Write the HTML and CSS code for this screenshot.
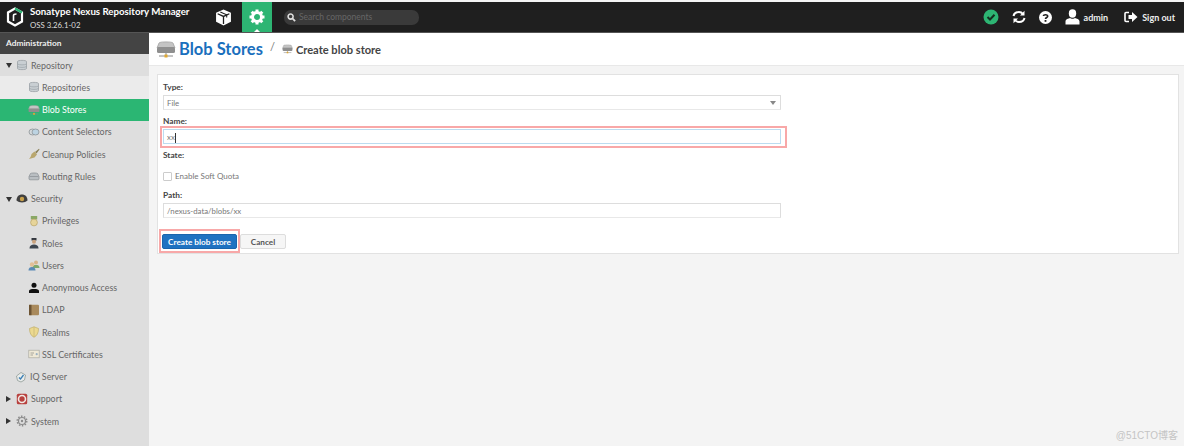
FILE: index.html
```html
<!DOCTYPE html>
<html lang="en">
<head>
  <meta charset="UTF-8">
  <title>Create blob store</title>
  <link rel="stylesheet" href="styles.css">
</head>
<body>
  <svg class="defs" width="0" height="0">
    <symbol id="i-db" viewBox="0 0 12 12">
      <path d="M1.5 2.5C1.5 1 10.500 1 10.500 2.500V9.500C10.500 11 1.500 11 1.500 9.500Z" fill="#c9cfd3" stroke="#9aa1a6" stroke-width=".8"/>
      <path d="M1.500 5C3 6.200 9 6.200 10.500 5M1.500 7.500C3 8.700 9 8.700 10.500 7.500" fill="none" stroke="#9aa1a6" stroke-width=".7"/>
    </symbol>
    <symbol id="i-blob" viewBox="0 0 20 17">
      <path d="M1 7L3 2C3.500 .5 16.500 .5 17 2L19 7Z" fill="#c4c4c4" stroke="#9a9a9a" stroke-width=".7"/>
      <rect x="1" y="6" width="18" height="6" rx="1.500" fill="#8f8f8f"/>
      <path d="M10 12V15M3 15H17" stroke="#8a8a8a" stroke-width="1"/>
      <rect x="8.500" y="13.500" width="3" height="3" fill="#e0a832"/>
    </symbol>
  </svg>

  <header class="topbar">
    <div class="brand">
      <svg class="logo" width="18" height="20" viewBox="0 0 18 20">
        <path d="M9 1.500L16 5.500V14.500L9 18.500L2 14.500V5.500Z" fill="none" stroke="#fff" stroke-width="2.200"/>
        <path d="M9 1.500L16 5.500" fill="none" stroke="#2db573" stroke-width="2.200"/>
        <path d="M7.500 14V8.500C7.500 7.500 8.500 7 10.500 7" fill="none" stroke="#fff" stroke-width="1.600"/>
      </svg>
      <div class="brand-text">
        <div class="brand-name">Sonatype Nexus Repository Manager</div>
        <div class="brand-version">OSS 3.26.1-02</div>
      </div>
    </div>
    <div class="nav-cube">
      <svg width="17" height="17" viewBox="0 0 16 16">
        <path d="M8 .5L15 3.500V12L8 15.500L1 12V3.500Z" fill="#fff"/>
        <path d="M2.500 4.500L8 7L13.500 4.500M8 7V14" fill="none" stroke="#1f1f1f" stroke-width="1.200"/>
        <path d="M5 2.800L11 5.500V8" fill="none" stroke="#1f1f1f" stroke-width="1"/>
      </svg>
    </div>
    <div class="nav-gear">
      <svg width="16" height="16" viewBox="0 0 16 16">
        <circle cx="8" cy="8" r="4.500" fill="none" stroke="#fff" stroke-width="3"/>
        <path d="M8 .5V3M8 13V15.500M.5 8H3M13 8H15.500M2.700 2.700L4.500 4.500M11.500 11.500L13.300 13.300M13.300 2.700L11.500 4.500M4.500 11.500L2.700 13.300" stroke="#fff" stroke-width="3"/>
      </svg>
    </div>
    <div class="search">
      <svg width="9" height="9" viewBox="0 0 10 10">
        <circle cx="4" cy="4" r="2.800" fill="none" stroke="#ddd" stroke-width="1.700"/>
        <path d="M6 6L9 9" stroke="#ddd" stroke-width="2"/>
      </svg>
      <span>Search components</span>
    </div>
    <div class="top-right">
      <svg class="status" width="16" height="16" viewBox="0 0 16 16">
        <circle cx="8" cy="8" r="7.500" fill="#2db573"/>
        <path d="M4.500 8L7 10.500L11.500 5.800" fill="none" stroke="#14301f" stroke-width="2"/>
      </svg>
      <svg class="refresh" width="14" height="14" viewBox="0 0 14 14">
        <path d="M1.500 6C2 3.500 4.200 2 7 2C8.800 2 10.200 3 11 4" fill="none" stroke="#fff" stroke-width="2"/>
        <path d="M12.500 .8V5.500H8Z" fill="#fff"/>
        <path d="M12.500 8C12 10.500 9.800 12 7 12C5.200 12 3.800 11 3 10" fill="none" stroke="#fff" stroke-width="2"/>
        <path d="M1.500 13.200V8.500H6Z" fill="#fff"/>
      </svg>
      <svg class="help" width="13" height="13" viewBox="0 0 13 13">
        <circle cx="6.500" cy="6.500" r="6.500" fill="#fff"/>
        <path d="M4.300 5C4.500 3.500 8.700 3.200 8.700 5.200C8.700 6.500 6.500 6.500 6.500 8" fill="none" stroke="#1f1f1f" stroke-width="1.600"/>
        <rect x="5.600" y="9" width="1.800" height="1.800" fill="#1f1f1f"/>
      </svg>
      <svg class="user" width="15" height="16" viewBox="0 0 15 16">
        <ellipse cx="7.500" cy="4.500" rx="3.700" ry="4.200" fill="#fff"/>
        <path d="M.5 15.500V12.500C.5 10 3.500 9.500 5 9C6 10 9 10 10 9C11.500 9.500 14.500 10 14.500 12.500V15.500Z" fill="#fff"/>
      </svg>
      <span class="top-label admin">admin</span>
      <svg class="signout" width="14" height="12" viewBox="0 0 14 12">
        <path d="M5 1.500H2C1.300 1.500 1 2 1 2.500V9.500C1 10 1.300 10.500 2 10.500H5" fill="none" stroke="#fff" stroke-width="1.600"/>
        <path d="M4.500 4H8V1L13.500 6L8 11V8H4.500Z" fill="#fff"/>
      </svg>
      <span class="top-label">Sign out</span>
    </div>
  </header>

  <div class="main">
    <nav class="sidebar">
      <div class="side-title">Administration</div>

      <div class="row"><i class="arrow-down"></i><svg class="ico" viewBox="0 0 12 12"><use href="#i-db"/></svg>Repository</div>
      <div class="row sub light"><svg class="ico" viewBox="0 0 12 12"><use href="#i-db"/></svg>Repositories</div>
      <div class="row sub active"><svg class="ico" viewBox="0 0 20 17"><use href="#i-blob"/></svg>Blob Stores</div>
      <div class="row sub">
        <svg class="ico" viewBox="0 0 12 12"><ellipse cx="4.500" cy="6" rx="3.500" ry="3" fill="#d5dadd" stroke="#8d9397" stroke-width=".8"/><ellipse cx="7.500" cy="6" rx="3.500" ry="3" fill="#bcd3e2" stroke="#8d9397" stroke-width=".8"/></svg>
        Content Selectors</div>
      <div class="row sub">
        <svg class="ico" viewBox="0 0 12 12"><path d="M7 4L11 .8L11.500 1.500L8.500 5.500Z" fill="#8b8158"/><path d="M6.500 3.500L9 6.500L6.500 9.500L1 11C2.500 9.500 3 8 3.500 6Z" fill="#b9a76e"/></svg>
        Cleanup Policies</div>
      <div class="row sub">
        <svg class="ico" viewBox="0 0 12 12"><path d="M1 6.500L2.500 3.500C3 2.800 9 2.800 9.500 3.500L11 6.500V9C11 9.500 10.500 9.800 10 9.800H2C1.500 9.800 1 9.500 1 9Z" fill="#b9bec2" stroke="#888e92" stroke-width=".7"/><path d="M1.500 6.500H10.500" stroke="#888e92" stroke-width=".7"/></svg>
        Routing Rules</div>

      <div class="row"><i class="arrow-down"></i>
        <svg class="ico" viewBox="0 0 12 12"><path d="M.5 7.500C.5 3.500 3 1.500 6 1.500C9 1.500 11.500 3.500 11.500 7.500C9 10 3 10 .5 7.500Z" fill="#3f3f3f"/><circle cx="6" cy="6" r="2.200" fill="#c8a04a"/></svg>
        Security</div>
      <div class="row sub">
        <svg class="ico" viewBox="0 0 12 12"><rect x="2.800" y="1" width="6.400" height="3.500" fill="#8aa866"/><circle cx="6" cy="7.500" r="3.400" fill="#e6d49a" stroke="#b8a468" stroke-width=".7"/></svg>
        Privileges</div>
      <div class="row sub">
        <svg class="ico" viewBox="0 0 12 12"><rect x="3.500" y="1" width="5" height="2.500" fill="#33383f"/><circle cx="6" cy="4.800" r="2" fill="#c9a27d"/><path d="M1.500 11.500C1.500 8.500 3.500 7.500 6 7.500C8.500 7.500 10.500 8.500 10.500 11.500Z" fill="#3d4650"/></svg>
        Roles</div>
      <div class="row sub">
        <svg class="ico" viewBox="0 0 12 12"><circle cx="8" cy="3.500" r="2" fill="#d8b48a"/><path d="M4.500 9C4.500 6.500 6 6 8 6C10 6 11.500 6.500 11.500 9Z" fill="#7fa86a"/><circle cx="4" cy="5.500" r="2.200" fill="#e2bf96"/><path d="M.5 11.500C.5 9 2 8 4 8C6 8 7.500 9 7.500 11.500Z" fill="#5a8ab5"/></svg>
        Users</div>
      <div class="row sub">
        <svg class="ico" viewBox="0 0 12 12"><circle cx="6" cy="3.200" r="2.500" fill="#111"/><path d="M1 11V9C1 7.500 3 7 6 7C9 7 11 7.500 11 9V11Z" fill="#111"/></svg>
        Anonymous Access</div>
      <div class="row sub">
        <svg class="ico" viewBox="0 0 12 12"><rect x="1" y=".8" width="10" height="10.400" rx="1" fill="#a98a5c"/><rect x="1" y=".8" width="2.500" height="10.400" fill="#6d5434"/></svg>
        LDAP</div>
      <div class="row sub">
        <svg class="ico" viewBox="0 0 12 12"><path d="M6 .8L10.500 2.500C10.500 7 9 9.800 6 11.200C3 9.800 1.500 7 1.500 2.500Z" fill="#ecd98f" stroke="#bfae6a" stroke-width=".7"/><path d="M6 .8V11.200" stroke="#c9b878" stroke-width=".8"/></svg>
        Realms</div>
      <div class="row sub">
        <svg class="ico" viewBox="0 0 12 12"><rect x=".8" y="2.200" width="10.400" height="7.600" fill="#efe9d6" stroke="#a9a9a0" stroke-width=".7"/><path d="M2.500 5H6M2.500 7H5" stroke="#8a8a84" stroke-width=".7"/><circle cx="8.700" cy="6.200" r="1.100" fill="#9ab0c2"/></svg>
        SSL Certificates</div>

      <div class="row mid">
        <svg class="ico" viewBox="0 0 12 12"><path d="M1.500 5L6 1.500L10.500 4L9.500 9L6 11L2.500 9.500Z" fill="#e9eceb" stroke="#8f9a96" stroke-width=".8"/><path d="M4 6.500L5.500 8L8.500 4" fill="none" stroke="#3c7fb5" stroke-width="1.300"/></svg>
        IQ Server</div>
      <div class="row"><i class="arrow-right"></i>
        <svg class="ico" viewBox="0 0 12 12"><rect x=".8" y=".8" width="10.400" height="10.400" rx="1.500" fill="#b8413f"/><circle cx="6" cy="6" r="3.500" fill="none" stroke="#f1e9e4" stroke-width="1.600"/></svg>
        Support</div>
      <div class="row"><i class="arrow-right"></i>
        <svg class="ico" viewBox="0 0 12 12"><circle cx="6" cy="6" r="3.500" fill="none" stroke="#8b8b8b" stroke-width="1.200"/><circle cx="6" cy="6" r="4.800" fill="none" stroke="#8b8b8b" stroke-width="1.400" stroke-dasharray="1.500 1.500"/><circle cx="6" cy="6" r="1.200" fill="#8b8b8b"/></svg>
        System</div>
    </nav>

    <main class="content">
      <div class="crumbs">
        <svg class="crumb-icon" width="20" height="17" viewBox="0 0 20 17"><use href="#i-blob"/></svg>
        <span class="crumb-title">Blob Stores</span>
        <span class="crumb-sep">/</span>
        <svg class="crumb-small" width="11" height="10" viewBox="0 0 20 17"><use href="#i-blob"/></svg>
        <span class="crumb-sub">Create blob store</span>
      </div>

      <section class="panel">
        <form class="blob-form">
          <label class="lbl">Type:</label>
          <div class="field select">File<i class="select-arrow"></i></div>
          <label class="lbl">Name:</label>
          <div class="marked-name">
            <div class="field focused">xx<i class="caret"></i></div>
          </div>
          <label class="lbl">State:</label>
          <div class="check-row"><i class="checkbox"></i>Enable Soft Quota</div>
          <label class="lbl">Path:</label>
          <div class="field">/nexus-data/blobs/xx</div>
          <div class="actions">
            <div class="marked-btn"><button type="button" class="btn-primary">Create blob store</button></div>
            <button type="button" class="btn-cancel">Cancel</button>
          </div>
        </form>
      </section>
    </main>
  </div>

  <div class="watermark">@51CTO博客</div>
</body>
</html>
```

FILE: styles.css
```css
html, body {
    margin: 0;
    height: 446px;
    overflow: hidden;
}
body {
    font-family: Lato, "Open Sans", sans-serif;
    font-size: 8.900px;
    color: #666;
    background-color: #f4f4f4;
    padding-top: 2px;
    box-sizing: border-box;
    position: relative;
}
.defs {
    position: absolute;
}

/* top bar */
.topbar {
    height: 30px;
    background-color: #1f1f1f;
    display: flex;
    align-items: center;
    color: #fff;
    border-bottom: 1px solid #555;
}
.brand {
    display: flex;
    align-items: center;
    width: 205px;
    padding-left: 6px;
    box-sizing: border-box;
}
.logo {
    margin-right: 6px;
}
.brand-name {
    font-size: 9.700px;
    font-weight: 700;
    white-space: nowrap;
    line-height: 13px;
    margin-top: 2px;
}
.brand-version {
    font-size: 7.800px;
    color: #ddd;
    line-height: 11px;
    margin-top: 2px;
}
.nav-cube {
    width: 37px;
    display: flex;
    justify-content: center;
}
.nav-gear {
    width: 30px;
    height: 30px;
    background-color: #2db573;
    display: flex;
    align-items: center;
    justify-content: center;
    position: relative;
}
.nav-gear::after {
    content: "";
    position: absolute;
    left: 12px;
    bottom: 0;
    border-left: 3px solid transparent;
    border-right: 3px solid transparent;
    border-bottom: 3px solid #fff;
}
.search {
    width: 135px;
    height: 15px;
    margin-left: 12px;
    background-color: #3a3a3a;
    border-radius: 7px;
    display: flex;
    align-items: center;
    padding-left: 3px;
    box-sizing: border-box;
    font-size: 8.500px;
    color: #666;
}
.search svg {
    margin-right: 3px;
}
.top-right {
    margin-left: auto;
    display: flex;
    align-items: center;
    padding-right: 9px;
}
.refresh {
    margin-left: 13px;
}
.help {
    margin-left: 13px;
}
.user {
    margin-left: 13px;
    margin-right: 4px;
}
.top-label {
    font-size: 9px;
    font-weight: 700;
    color: #eee;
}
.signout {
    margin-left: 16px;
    margin-right: 4px;
}

/* layout */
.main {
    display: flex;
    height: 413px;
}
.sidebar {
    width: 149px;
    flex-shrink: 0;
    background-color: #dedede;
}
.side-title {
    height: 21px;
    line-height: 21px;
    background-color: #444;
    color: #eee;
    font-size: 8.400px;
    font-weight: 700;
    padding-left: 6px;
}
.row {
    height: 22.250px;
    display: flex;
    align-items: center;
    padding-left: 16px;
    box-sizing: border-box;
    position: relative;
}
.row.sub {
    padding-left: 28px;
}
.row.sub .ico {
    margin-right: 2px;
}
.row.mid {
    padding-left: 15px;
}
.row.light {
    background-color: #ebebeb;
}
.row.active {
    background-color: #2bb673;
    color: #fff;
}
.ico {
    width: 12px;
    height: 12px;
    margin-right: 3px;
    flex-shrink: 0;
}
.arrow-down {
    position: absolute;
    left: 6px;
    top: 9px;
    border-left: 3px solid transparent;
    border-right: 3px solid transparent;
    border-top: 5px solid #333;
}
.arrow-right {
    position: absolute;
    left: 6px;
    top: 8px;
    border-top: 3px solid transparent;
    border-bottom: 3px solid transparent;
    border-left: 5px solid #333;
}

/* content */
.content {
    flex: 1;
    min-width: 0;
}
.crumbs {
    height: 32px;
    background-color: #fff;
    border-bottom: 1px solid #e8e8e8;
    display: flex;
    align-items: center;
    padding-left: 7px;
}
.crumb-title {
    font-size: 16.500px;
    font-weight: 700;
    color: #1a6fbd;
    margin: 0 0 0 3px;
}
.crumb-sep {
    font-size: 11px;
    color: #777;
    margin: 0 7px 5px;
}
.crumb-small {
    margin-right: -1px;
}
.crumb-sub {
    font-size: 11.100px;
    font-weight: 700;
    color: #444;
    margin-left: 4px;
}
.panel {
    margin: 8px 5px 0 8px;
    background-color: #fff;
    border: 1px solid #e2e2e2;
    height: 180px;
    box-sizing: border-box;
}
.blob-form {
    padding: 7px 397px 0 5px;
}
.lbl {
    display: block;
    font-size: 8.300px;
    font-weight: 700;
    color: #444;
    line-height: 11px;
    margin-bottom: 2px;
}
.field {
    height: 15px;
    line-height: 14px;
    border: 1px solid #ddd;
    border-bottom-color: #e8e8e8;
    box-sizing: border-box;
    padding-left: 3px;
    font-size: 7.800px;
    color: #777;
    margin-bottom: 6px;
    position: relative;
}
.select-arrow {
    position: absolute;
    right: 4px;
    top: 5px;
    border-left: 3px solid transparent;
    border-right: 3px solid transparent;
    border-top: 4px solid #888;
}
.focused {
    border-color: #bcdcf0;
}
.caret {
    display: inline-block;
    width: 1px;
    height: 10px;
    background-color: #333;
    vertical-align: middle;
}
.marked-name {
    position: relative;
}
.marked-name::after {
    content: "";
    position: absolute;
    left: -3px;
    right: -6px;
    top: -3px;
    bottom: -4px;
    border: 2px solid #f8a8a8;
    pointer-events: none;
}
.check-row {
    display: flex;
    align-items: center;
    height: 12px;
    margin: 9px 0 8px;
    font-size: 8px;
    color: #777;
}
.checkbox {
    width: 7px;
    height: 7px;
    border: 1px solid #ccc;
    border-radius: 1px;
    margin-right: 3px;
}
.actions {
    display: flex;
    margin-top: 16px;
    margin-left: -1px;
}
.marked-btn {
    position: relative;
    margin-right: 3px;
}
.marked-btn::after {
    content: "";
    position: absolute;
    left: -3px;
    right: -3px;
    top: -5px;
    bottom: -4px;
    border: 2px solid #f8a8a8;
    pointer-events: none;
}
.btn-primary, .btn-cancel {
    display: block;
    height: 15px;
    padding: 0;
    font-family: Lato, "Open Sans", sans-serif;
    font-size: 8.200px;
    font-weight: 700;
    border-radius: 2px;
    box-sizing: border-box;
}
.btn-primary {
    width: 75px;
    background-color: #1f72c1;
    border: 1px solid #1a65ad;
    color: #fff;
}
.btn-cancel {
    width: 46px;
    background-color: #f6f6f6;
    border: 1px solid #ddd;
    color: #555;
}
.watermark {
    position: absolute;
    right: 6px;
    bottom: 4px;
    font-family: "Liberation Sans", "Noto Sans CJK SC", sans-serif;
    font-size: 10px;
    color: #c4c4c4;
}
```
